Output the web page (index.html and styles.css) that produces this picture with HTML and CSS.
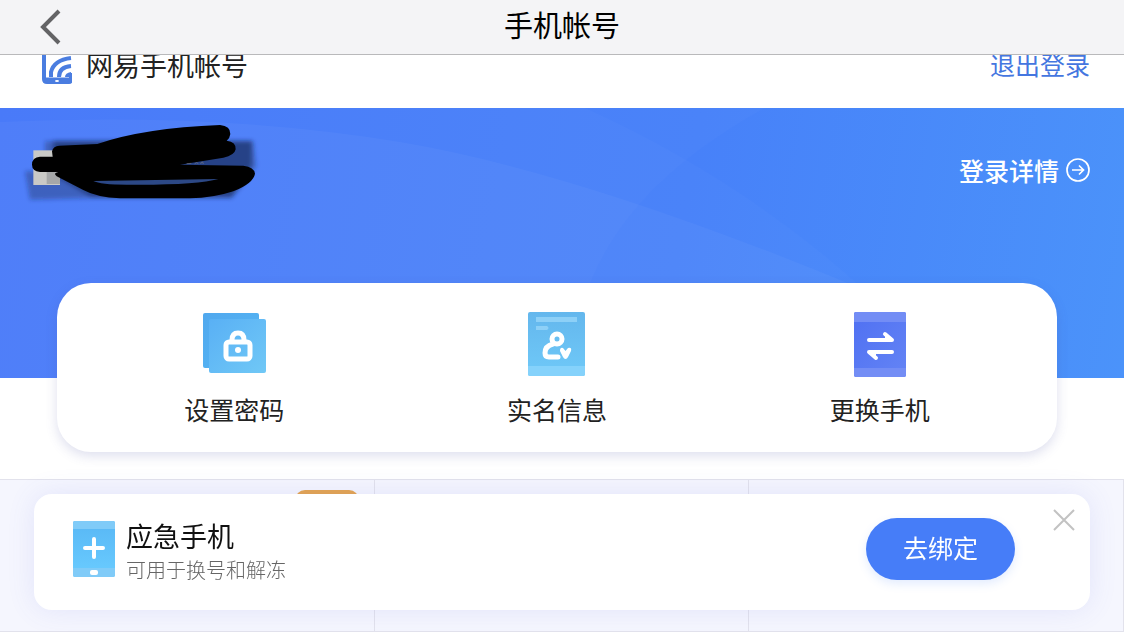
FILE: index.html
```
<!DOCTYPE html>
<html lang="zh-CN">
<head>
  <meta charset="UTF-8">
  <meta name="viewport" content="width=device-width, initial-scale=1">
  <title>手机帐号</title>
  <link rel="stylesheet" href="styles.css">
</head>
<body>
  <nav class="navbar">
    <button class="back" aria-label="返回">
      <svg width="22" height="36" viewBox="0 0 22 36"><path d="M19 2 3 18l16 16" fill="none" stroke="#636365" stroke-width="4"/></svg>
    </button>
    <h1>手机帐号</h1>
  </nav>

  <header class="site-header">
    <a class="brand" href="#">
      <svg width="30" height="38" viewBox="0 0 30 38">
        <path d="M2 0v33q0 3 3 3h22q2 0 2-3v-6" fill="none" stroke="#4a7de0" stroke-width="4"/>
        <path d="M2 34h26" stroke="#4a7de0" stroke-width="5"/>
        <path d="M9 31V26Q12 14 29 12M17 31Q17 21 29 20" fill="none" stroke="#4a7de0" stroke-width="4"/>
        <path d="M23 31q0-4 6-5v5z" fill="#4a7de0"/>
        <ellipse cx="15" cy="35" rx="2" ry="1" fill="#fff"/>
      </svg>
      <span>网易手机帐号</span>
    </a>
    <a class="logout" href="#">退出登录</a>
  </header>

  <main>
    <section class="banner">
      <svg class="banner-bg" viewBox="0 0 1124 270" preserveAspectRatio="none">
        <path d="M0 14Q220 4 400 34T860 180L990 270H0z" fill="#fff" fill-opacity=".035"/>
        <path d="M0 0H585Q740 70 860 178L940 270H0z" fill="#fff" fill-opacity=".02"/>
        <path d="M765 0Q620 80 585 190L570 270H0V0z" fill="#fff" fill-opacity=".02"/>
      </svg>
      <svg class="scribble" width="270" height="110" viewBox="0 0 810 330">
        <defs>
          <filter id="soft"><feGaussianBlur stdDeviation="6"/></filter>
        </defs>
        <g filter="url(#soft)" fill="#14264f">
          <path d="M105 100H730L738 175 700 230 665 270H250L60 275 45 190H105z" fill-opacity=".35"/>
          <path d="M130 98H725V172L665 268H245L130 200z" fill-opacity=".5"/>
        </g>
        <path d="M70 127h80v104H70z" fill="#c9c9c6"/>
        <path d="M110 180h40v48h-40z" fill="#a5a7a8"/>
        <path d="M240 218Q400 208 630 213 580 232 400 232 280 230 240 218z" fill="#2c4885"/>
        <path d="M126 130Q130 114 148 113L262 108Q400 60 630 51 662 54 661 78 660 90 650 98 679 102 677 124 674 142 640 149L510 170 700 173Q733 177 735 197 730 226 670 250 610 270 540 271H330Q260 268 220 246L140 205Q128 195 145 192H90Q66 189 66 170 66 148 90 146H128zM250 219Q270 230 350 230 560 232 625 213z" fill="#000" fill-rule="evenodd"/>
        <path d="M530 167l14-1M554 167l6-3 5 3M572 168l2-5 4-1 2 6" fill="none" stroke="#77777d" stroke-width="2"/>
      </svg>
      <a class="detail" href="#">
        登录详情
        <svg width="24" height="24" viewBox="0 0 24 24" fill="none" stroke="#fff"><circle cx="12" cy="12" r="11" stroke-width="1.7"/><path d="M6 12h11M13 7.500l4.500 4.500-4.500 4.500" stroke-width="1.700"/></svg>
      </a>
    </section>

    <section class="actions">
      <a class="action" href="#">
        <svg width="66" height="68" viewBox="0 0 66 68">
          <defs>
            <linearGradient id="lockBack" x2="1" y2="1"><stop stop-color="#51a8ee"/><stop offset="1" stop-color="#55b8f5"/></linearGradient>
            <linearGradient id="lockFront" x2="1" y2="1"><stop stop-color="#59b0f5"/><stop offset="1" stop-color="#70c8f6"/></linearGradient>
          </defs>
          <rect x="2" y="2" width="56" height="55" rx="2" fill="url(#lockBack)"/>
          <rect x="8" y="8" width="57" height="54" rx="2" fill="url(#lockFront)"/>
          <path d="M31 31V29q0-7 6-7t6 7v2" fill="none" stroke="#fff" stroke-width="5"/>
          <rect x="25" y="31" width="24" height="17" rx="3" fill="none" stroke="#fff" stroke-width="5"/>
          <circle cx="37" cy="39" r="3" fill="#fff"/>
        </svg>
        <span>设置密码</span>
      </a>
      <a class="action" href="#">
        <svg width="58" height="68" viewBox="0 0 58 68">
          <defs>
            <linearGradient id="idBg" x2="0" y2="1"><stop stop-color="#64b7ed"/><stop offset="1" stop-color="#6fc9f8"/></linearGradient>
          </defs>
          <rect y="1" width="57" height="64" rx="2" fill="url(#idBg)"/>
          <path d="M0 55h57v8q0 2-2 2H2q-2 0-2-2z" fill="#85d2fb"/>
          <path d="M8 6h41v5H8zM8 15h11q3 2 0 4H8z" fill="#8dd0f7"/>
          <circle cx="29" cy="28" r="5" fill="none" stroke="#fff" stroke-width="5"/>
          <path d="M25 33Q17 35 17 42 17 46 21 46h9" fill="none" stroke="#fff" stroke-width="5" stroke-linecap="round"/>
          <path d="M37.500 48q-1.500 0-2.500-2l-3-6q0-4 3-3l2.500 3 2.500-3q4-1 3 3l-3 6q-1 2-2.500 2z" fill="#fff"/>
        </svg>
        <span>实名信息</span>
      </a>
      <a class="action" href="#">
        <svg width="54" height="68" viewBox="0 0 54 68">
          <defs>
            <linearGradient id="swapBg" x2="1" y2="1"><stop stop-color="#4f70f2"/><stop offset="1" stop-color="#6484f5"/></linearGradient>
          </defs>
          <rect x="1" y="1" width="52" height="65" rx="2" fill="url(#swapBg)"/>
          <path d="M1 11V3q0-2 2-2h48q2 0 2 2v8zM1 57h52v7q0 2-2 2H3q-2 0-2-2z" fill="#738df5"/>
          <path d="M16 29h23l-7-6M39 41H16l7 6" fill="none" stroke="#fff" stroke-width="4" stroke-linecap="round" stroke-linejoin="round"/>
          <path d="M32 23l7 6h-7zM23 47l-7-6h7z" fill="#fff"/>
        </svg>
        <span>更换手机</span>
      </a>
    </section>

    <section class="services">
      <div class="service"><i class="badge"></i></div>
      <div class="service"></div>
      <div class="service"></div>
    </section>
  </main>

  <aside class="notice">
    <svg class="notice-icon" width="44" height="60" viewBox="0 0 44 60">
      <defs>
        <linearGradient id="phoneBg" x2="0" y2="1"><stop stop-color="#58b7f5"/><stop offset="1" stop-color="#6accff"/></linearGradient>
      </defs>
      <rect x="1" y="2" width="42" height="56" rx="2" fill="url(#phoneBg)"/>
      <path d="M1 10V4q0-2 2-2h38q2 0 2 2v6zM1 49h42v7q0 2-2 2H3q-2 0-2-2z" fill="#80cbf8"/>
      <path d="M13 29h18M22 20v18" stroke="#fff" stroke-width="4" stroke-linecap="round"/>
      <rect x="18" y="51" width="8" height="5" rx="2" fill="#fff"/>
    </svg>
    <div class="notice-text">
      <h2>应急手机</h2>
      <p>可用于换号和解冻</p>
    </div>
    <button class="bind">去绑定</button>
    <button class="close" aria-label="关闭">
      <svg width="22" height="22" viewBox="0 0 22 22"><path d="M1 1l20 20M21 1L1 21" stroke="#c2c2c2" stroke-width="2"/></svg>
    </button>
  </aside>
</body>
</html>
```
FILE: styles.css
```
* {
  box-sizing: border-box;
}

body {
  margin: 0;
  background: #fff;
  color: #222;
  font-family: "Noto Sans CJK SC", sans-serif;
  font-size: 25px;
  line-height: 36px;
}

a {
  color: inherit;
  text-decoration: none;
}

button {
  border: none;
  padding: 0;
  background: none;
  font-family: inherit;
  cursor: pointer;
}

svg {
  display: block;
  flex: none;
}

h1, h2, p {
  margin: 0;
  font-weight: 400;
}

.navbar {
  position: sticky;
  top: 0;
  z-index: 2;
  display: grid;
  grid-template-columns: 1fr auto 1fr;
  align-items: center;
  height: 55px;
  padding: 0 40px;
  background: #f4f4f6;
  border-bottom: 1px solid #b9b9bb;
}

.back {
  justify-self: start;
}

.navbar h1 {
  padding-bottom: 6px;
  color: #000;
  font-size: 29px;
}

/* scrolled a little under the navbar */
.site-header {
  display: flex;
  justify-content: space-between;
  align-items: center;
  height: 82px;
  margin-top: -29px;
  padding: 0 34px 4px 42px;
}

.brand {
  display: flex;
  align-items: center;
  gap: 14px;
  font-size: 27px;
}

.logout {
  padding-bottom: 2px;
  color: #4476e0;
}

.banner {
  position: relative;
  display: flex;
  justify-content: space-between;
  align-items: flex-start;
  height: 270px;
  padding: 0 34px 0 10px;
  background: linear-gradient(100deg, #4376f9, #4781f9 60%, #4b93fa);
}

.banner-bg {
  position: absolute;
  inset: 0;
  width: 100%;
  height: 100%;
}

.scribble {
  position: relative;
}

.detail {
  position: relative;
  display: flex;
  align-items: center;
  gap: 7px;
  margin-top: 44px;
  color: #fff;
  font-weight: 500;
}

.actions {
  position: relative;
  display: grid;
  grid-template-columns: repeat(3, 1fr);
  height: 169px;
  margin: -95px 67px 27px 57px;
  padding: 28px 16px 0;
  background: #fff;
  border-radius: 34px;
  box-shadow: 0 4px 12px rgba(70, 80, 160, 0.18);
}

.action {
  display: flex;
  flex-direction: column;
  align-items: center;
  gap: 12px;
}

.services {
  display: grid;
  grid-template-columns: repeat(3, 1fr);
  height: 153px;
  background: #f5f6fe;
  border-top: 1px solid #e2e2ec;
  border-bottom: 1px solid #e2e2ec;
}

.service {
  position: relative;
  border-right: 1px solid #e2e2ec;
}

.badge {
  position: absolute;
  top: 10px;
  right: 15px;
  width: 64px;
  height: 28px;
  border-radius: 10px;
  background: #e5a550;
}

.notice {
  position: fixed;
  left: 34px;
  right: 34px;
  bottom: 22px;
  display: flex;
  align-items: center;
  height: 116px;
  padding: 0 75px 6px 38px;
  background: #fff;
  border-radius: 18px;
  box-shadow: 0 0 28px rgba(90, 100, 220, 0.12);
}

.notice-icon {
  margin-right: 10px;
}

.notice-text {
  flex: 1;
  padding-top: 6px;
}

.notice h2 {
  font-size: 27px;
  color: #111;
}

.notice p {
  color: #666;
  font-size: 20px;
  font-weight: 300;
  line-height: 32px;
}

.bind {
  width: 149px;
  height: 62px;
  padding-bottom: 4px;
  border-radius: 31px;
  background: #467df8;
  color: #fff;
  font-size: 25px;
  box-shadow: 0 4px 10px rgba(70, 125, 248, 0.15);
}

.close {
  position: absolute;
  top: 15px;
  right: 15px;
}
```
